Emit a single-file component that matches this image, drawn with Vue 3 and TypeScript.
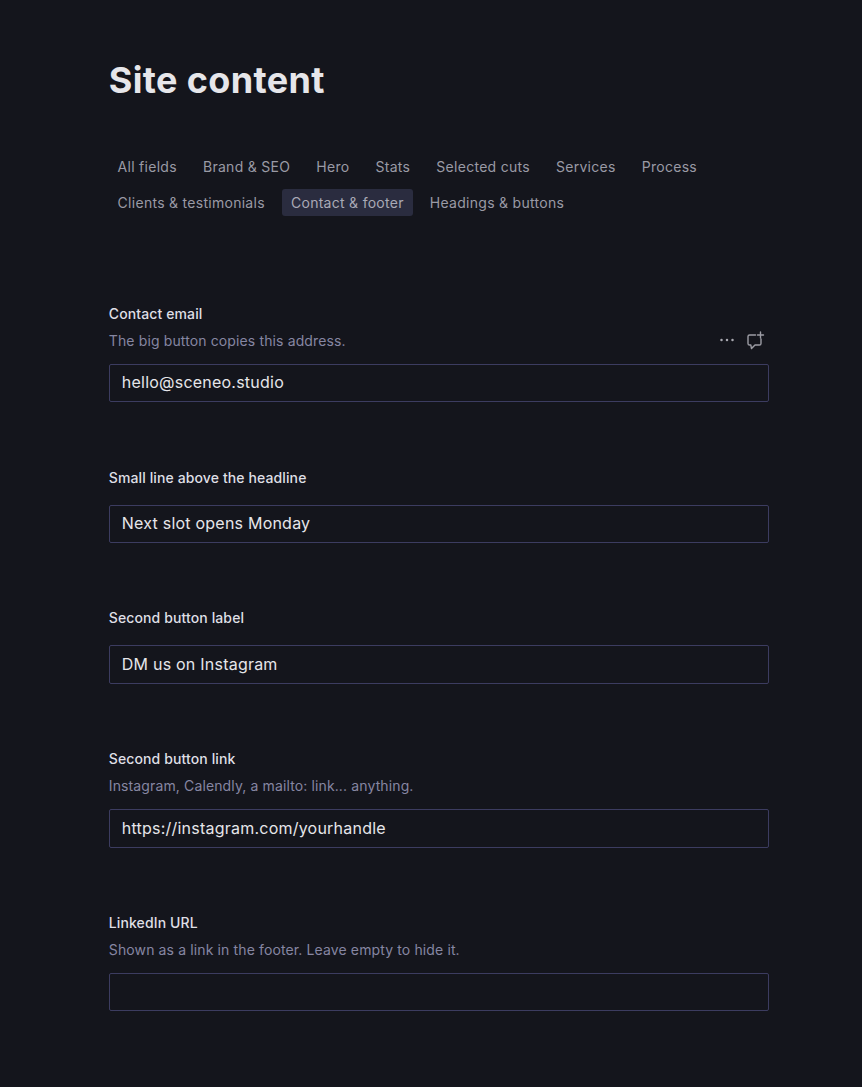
<script setup lang="ts">
interface Field { label: string; desc?: string; value: string; tools?: boolean }
const tabs: string[] = ['All fields', 'Brand & SEO', 'Hero', 'Stats', 'Selected cuts', 'Services', 'Process', 'Clients & testimonials', 'Contact & footer', 'Headings & buttons']
const active = 'Contact & footer'
const fields: Field[] = [
  { label: 'Contact email', desc: 'The big button copies this address.', value: 'hello@sceneo.studio', tools: true },
  { label: 'Small line above the headline', value: 'Next slot opens Monday' },
  { label: 'Second button label', value: 'DM us on Instagram' },
  { label: 'Second button link', desc: 'Instagram, Calendly, a mailto: link... anything.', value: 'https://instagram.com/yourhandle' },
  { label: 'LinkedIn URL', desc: 'Shown as a link in the footer. Leave empty to hide it.', value: '' },
]
</script>

<template>
  <main class="page">
    <h1 class="title">Site content</h1>
    <nav class="tabs">
      <button v-for="t in tabs" :key="t" class="tab" :class="{ active: t === active }">{{ t }}</button>
    </nav>
    <section class="fields">
      <div v-for="f in fields" :key="f.label" class="field" :class="{ 'has-tools': f.tools }">
        <label class="label" :class="{ solo: !f.desc }">{{ f.label }}</label>
        <p v-if="f.desc" class="desc">{{ f.desc }}</p>
        <div v-if="f.tools" class="tools">
          <svg width="18" height="18" viewBox="0 0 18 18" fill="#a8a8b0"><circle cx="3.5" cy="9" r="1.25"/><circle cx="9" cy="9" r="1.25"/><circle cx="14.5" cy="9" r="1.25"/></svg>
          <svg width="20" height="20" viewBox="0 0 20 20" fill="none" stroke="#9c9ca4" stroke-width="1.4" stroke-linecap="round" stroke-linejoin="round"><path d="M9.5 5H3.6A1.6 1.6 0 0 0 2 6.6v6.8A1.6 1.6 0 0 0 3.6 15h1.2l.7 3.6L9 15h4.4a1.6 1.6 0 0 0 1.6-1.6V9"/><path d="M14.5 2v6M11.5 5h6"/></svg>
        </div>
        <input class="input" type="text" :value="f.value" />
      </div>
    </section>
  </main>
</template>

<style>
html, body { background: #14151c; }
</style>

<style scoped>
.page {
  box-sizing: border-box;
  width: 862px;
  min-height: 1087px;
  padding: 58px 93px 0 108.8px;
  background: #14151c;
  font-family: Inter, "Liberation Sans", sans-serif;
}
.title {
  margin: 0;
  font-size: 36px;
  line-height: 44px;
  font-weight: 700;
  letter-spacing: 0.01em;
  color: #e6e6ea;
}
.tabs {
  display: flex;
  flex-wrap: wrap;
  gap: 9px 8.5px;
  margin-top: 51px;
}
.tab {
  height: 27px;
  padding: 0 8.8px;
  border: 0;
  border-radius: 3px;
  background: transparent;
  color: #9a9aa5;
  font: 400 14px/27px Inter, "Liberation Sans", sans-serif;
  letter-spacing: 0.02em;
}
.tab.active {
  background: #2a2c3f;
  color: #a9a9b6;
}
.fields {
  display: flex;
  flex-direction: column;
  gap: 65px;
  margin-top: 88px;
}
.field {
  position: relative;
  display: flex;
  flex-direction: column;
}
.field.has-tools {
  margin-bottom: 0.75px;
}
.label {
  font-size: 14px;
  line-height: 20px;
  font-weight: 500;
  letter-spacing: 0.008em;
  color: #dfdfe5;
  margin-bottom: 7.2px;
}
.label.solo {
  margin-bottom: 17px;
}
.desc {
  margin: 0 0 13.2px;
  font-size: 14px;
  line-height: 20px;
  letter-spacing: 0.009em;
  color: #8686a2;
}
.has-tools .desc {
  margin-bottom: 12.7px;
}
.tools {
  position: absolute;
  top: 26px;
  right: 3.2px;
  display: flex;
  align-items: center;
  gap: 9.5px;
}
.input {
  box-sizing: border-box;
  width: 100%;
  height: 38.4px;
  padding: 0 12px 1.6px;
  border: 1px solid #3c3c60;
  border-radius: 2px;
  background: #14151c;
  color: #e6e6ea;
  font: 400 16px Inter, "Liberation Sans", sans-serif;
  letter-spacing: 0.014em;
  outline: none;
}
</style>
